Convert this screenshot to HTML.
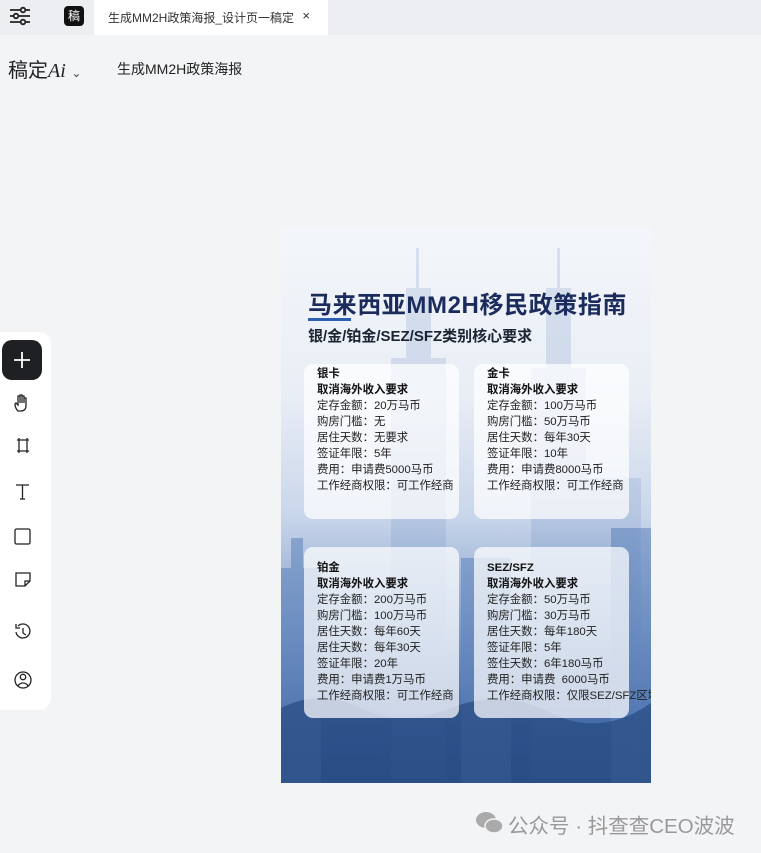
<!DOCTYPE html>
<html><head><meta charset="utf-8"><style>
*{margin:0;padding:0;box-sizing:border-box}
body{width:761px;height:853px;background:#f3f4f6;font-family:"Liberation Sans","Noto Sans CJK SC",sans-serif;position:relative;overflow:hidden;color:#222}
.tabbar{position:absolute;left:0;top:0;width:761px;height:35px;background:#eceef1}
.tab{position:absolute;left:94px;top:0;width:234px;height:35px;background:#fff;font-size:12px;color:#333;padding:9px 0 0 14px}
.tab span{position:absolute;right:18px;top:8px;font-size:13px}
.logoicon{position:absolute;left:64px;top:6px;width:20px;height:20px;background:#111;border-radius:4px;color:#fff;font-size:12px;text-align:center;line-height:20px}
.brand{position:absolute;left:8px;top:54px;font-size:20px;color:#222}
.doc{position:absolute;left:117px;top:59px;font-size:14px;color:#222}
.side{position:absolute;left:-10px;top:332px;width:61px;height:378px;background:#fff;border-radius:12px}
.plus{position:absolute;left:2px;top:340px;width:40px;height:40px;background:#1e2023;border-radius:10px}
.poster{position:absolute;left:281px;top:228px;width:370px;height:555px;overflow:hidden;background:linear-gradient(#f3f6fa 0%,#e9eef6 30%,#c9d6ea 52%,#7f9dc9 72%,#3d63a0 90%,#2f5490 100%)}
.card{position:absolute;background:rgba(255,255,255,.72);border-radius:9px}
.txt{position:absolute;font-size:11.4px;line-height:16px;color:#222;white-space:nowrap}
.txt b{font-weight:bold;color:#111}
</style></head><body>
<div class="tabbar"></div>
<svg style="position:absolute;left:9px;top:6px" width="22" height="20" viewBox="0 0 22 20" fill="none" stroke="#222" stroke-width="1.8"><path d="M1 4h20M1 10h20M1 16h20"/><circle cx="14" cy="4" r="2.3" fill="#eceef1"/><circle cx="7" cy="10" r="2.3" fill="#eceef1"/><circle cx="14" cy="16" r="2.3" fill="#eceef1"/></svg>
<div class="logoicon">稿</div>
<div class="tab">生成MM2H政策海报_设计页一稿定<span>×</span></div>
<div class="brand">稿定<i style="font-family:'Liberation Serif',serif">Ai</i> <span style="font-size:12px;color:#444">⌄</span></div>
<div class="doc">生成MM2H政策海报</div>
<div class="side"></div>
<div class="plus"><svg width="40" height="40"><path d="M20 12v16M12 20h16" stroke="#fff" stroke-width="1.8"/></svg></div>
<svg style="position:absolute;left:12px;top:392px" width="22" height="300" fill="none" stroke="#222" stroke-width="1.3">
<path d="M6 19c-2-2-3-5-3-7l1-1 2 2V4h2v7V3h2v8V4h2v7V6h2v8c0 3-2 5-5 5z"/>
<path d="M5 48h12M5 59h12M7 46v15M15 46v15"/>
<path d="M4 93h13M10.5 93v14M8 107h5"/>
<rect x="3" y="137" width="15" height="15" rx="1.5"/>
<path d="M4 181h14v8l-5 5H4z M18 189h-5v5"/>
<path d="M4 240a7 7 0 1 0 2-6M4 232v4h4M11 236v5l3 2"/>
<circle cx="11" cy="288" r="8"/><circle cx="11" cy="285" r="2.7"/><path d="M6 294c2-4 8-4 10 0"/>
</svg>
<div class="poster">
<svg style="position:absolute;left:0;top:0" width="370" height="555" fill="#5e83bb">
<g opacity=".18"><rect x="110" y="130" width="55" height="420"/><rect x="125" y="60" width="25" height="80"/><rect x="135" y="20" width="3" height="50"/>
<rect x="250" y="140" width="55" height="410"/><rect x="265" y="60" width="25" height="90"/><rect x="276" y="20" width="3" height="50"/>
<rect x="300" y="250" width="60" height="300"/></g>
<g opacity=".55"><rect x="0" y="340" width="40" height="215"/><rect x="180" y="330" width="50" height="225"/><rect x="330" y="300" width="40" height="255"/><rect x="10" y="310" width="12" height="40"/></g>
<g fill="#274a80" opacity=".7"><path d="M0 480q40-20 80 0t90 0 100 5 100-10V555H0z"/></g>
</svg>
<div style="position:absolute;left:27px;top:57px;font-size:24px;font-weight:bold;color:#1b2c5c;letter-spacing:.6px;white-space:nowrap">马来西亚MM2H移民政策指南</div>
<div style="position:absolute;left:27px;top:90px;width:43px;height:3px;background:#2d5fb0"></div>
<div style="position:absolute;left:27px;top:97px;font-size:15px;font-weight:bold;color:#1b2433;white-space:nowrap">银/金/铂金/SEZ/SFZ类别核心要求</div>
<div class="card" style="left:23px;top:136px;width:155px;height:155px"></div>
<div class="card" style="left:193px;top:136px;width:155px;height:155px"></div>
<div class="card" style="left:23px;top:319px;width:155px;height:171px"></div>
<div class="card" style="left:193px;top:319px;width:155px;height:171px"></div>
<div class="txt" style="left:36px;top:138px"><b>银卡</b><br><b>取消海外收入要求</b><br>定存金额：20万马币<br>购房门槛：无<br>居住天数：无要求<br>签证年限：5年<br>费用：申请费5000马币<br>工作经商权限：可工作经商</div>
<div class="txt" style="left:206px;top:138px"><b>金卡</b><br><b>取消海外收入要求</b><br>定存金额：100万马币<br>购房门槛：50万马币<br>居住天数：每年30天<br>签证年限：10年<br>费用：申请费8000马币<br>工作经商权限：可工作经商</div>
<div class="txt" style="left:36px;top:332px"><b>铂金</b><br><b>取消海外收入要求</b><br>定存金额：200万马币<br>购房门槛：100万马币<br>居住天数：每年60天<br>居住天数：每年30天<br>签证年限：20年<br>费用：申请费1万马币<br>工作经商权限：可工作经商</div>
<div class="txt" style="left:206px;top:332px"><b>SEZ/SFZ</b><br><b>取消海外收入要求</b><br>定存金额：50万马币<br>购房门槛：30万马币<br>居住天数：每年180天<br>签证年限：5年<br>签住天数：6年180马币<br>费用：申请费&nbsp; 6000马币<br>工作经商权限：仅限SEZ/SFZ区域</div>
</div>
<svg style="position:absolute;left:475px;top:810px" width="30" height="26" fill="#aaa"><ellipse cx="11" cy="10" rx="10" ry="8"/><ellipse cx="19" cy="16" rx="9" ry="7" stroke="#f3f4f6" stroke-width="1.5"/></svg>
<div style="position:absolute;left:508px;top:809px;font-size:20.5px;color:#999;white-space:nowrap">公众号 · 抖查查CEO波波</div>
</body></html>
